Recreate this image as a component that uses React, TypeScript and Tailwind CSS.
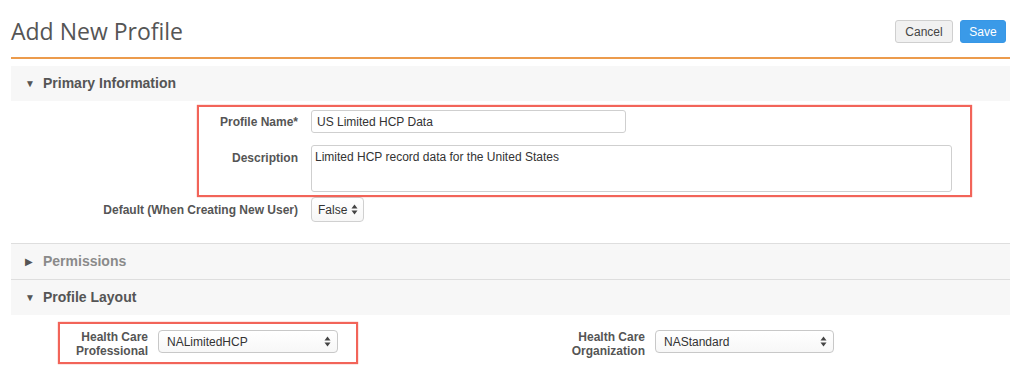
import type { ReactNode } from "react";

function Arrows() {
  return (
    <svg width="7" height="11" viewBox="0 0 7 11" className="shrink-0">
      <path d="M3.5 0.5L6.5 4.5H0.5Z" fill="#444" />
      <path d="M3.5 10.5L6.5 6.5H0.5Z" fill="#444" />
    </svg>
  );
}

function FakeSelect({ value, width }: { value: string; width: string }) {
  return (
    <div
      className={`flex h-[23px] ${width} items-center justify-between rounded-[4px] border border-[#c8c8c8] bg-gradient-to-b from-white to-[#f7f7f7] pl-[8px] pr-[6px] text-[12px] text-[#333]`}
    >
      <span>{value}</span>
      <Arrows />
    </div>
  );
}

function SectionHeader({ title, open, muted }: { title: string; open: boolean; muted?: boolean }) {
  return (
    <div className="flex h-[35px] items-center bg-[#f7f7f7] pl-[14px]">
      <span className="w-[18px] text-[10px] text-[#555]">{open ? "▼" : "▶"}</span>
      <span className={`text-[14px] font-bold ${muted ? "text-[#8a8a8a]" : "text-[#555]"}`}>{title}</span>
    </div>
  );
}

function Row({ label, children, align = "center" }: { label: ReactNode; children: ReactNode; align?: "center" | "start" }) {
  return (
    <div className={`flex gap-[13px] ${align === "center" ? "items-center" : "items-start"}`}>
      <div className="w-[287px] text-right text-[12px] font-bold text-[#555]">{label}</div>
      {children}
    </div>
  );
}

export default function App() {
  return (
    <div className="relative min-h-[376px] bg-white pl-[11px] pr-[5px] font-['Liberation_Sans',Arial,sans-serif]">
      <div className="flex items-start justify-between pb-[10px] pt-[16px]">
        <h1 className="font-['Open_Sans',sans-serif] text-[23px] leading-[31px] text-[#555]">Add New Profile</h1>
        <div className="mr-[4px] mt-[4px] flex gap-[7px]">
          <button
            type="button"
            className="h-[23px] w-[58px] rounded-[3px] border border-[#cfcfcf] bg-[#f1f1f1] text-[12px] text-[#444]"
          >
            Cancel
          </button>
          <button
            type="button"
            className="h-[23px] w-[46px] rounded-[3px] border border-[#3797e6] bg-[#3a9ae8] text-[12px] text-white"
          >
            Save
          </button>
        </div>
      </div>
      <div className="h-[2px] bg-[#ec9b4c]" />

      <div className="mt-[7px]">
        <SectionHeader title="Primary Information" open />
        <div className="flex flex-col pb-[21px] pt-[9px]">
          <Row label="Profile Name*">
            <div className="flex h-[23px] w-[315px] items-center rounded-[3px] border border-[#cfcfcf] px-[5px] text-[12px] text-[#333]">
              US Limited HCP Data
            </div>
          </Row>
          <div className="mt-[12px]">
            <Row label={<span className="block pt-[4px]">Description</span>} align="start">
              <div className="h-[47px] w-[641px] rounded-[3px] border border-[#cfcfcf] px-[3px] pt-[2px] text-[12px] text-[#333]">
                Limited HCP record data for the United States
              </div>
            </Row>
          </div>
          <div className="mt-[5px]">
            <Row label="Default (When Creating New User)">
              <div className="flex h-[25px] w-[53px] items-center justify-between rounded-[4px] border border-[#d0d0d0] bg-gradient-to-b from-white to-[#f7f7f7] pl-[6px] pr-[5px] text-[12px] text-[#333]">
                <span>False</span>
                <Arrows />
              </div>
            </Row>
          </div>
        </div>
      </div>

      <div className="border-t border-[#dedede]">
        <SectionHeader title="Permissions" open={false} muted />
      </div>
      <div className="border-t border-[#dedede]">
        <SectionHeader title="Profile Layout" open />
        <div className="grid grid-cols-[497px_1fr] pt-[15px]">
          <div className="flex items-start gap-[10px]">
            <div className="w-[137px] text-right text-[12px] font-bold leading-[14px] text-[#555]">
              Health Care
              <br />
              Professional
            </div>
            <FakeSelect value="NALimitedHCP" width="w-[180px]" />
          </div>
          <div className="flex items-start gap-[10px]">
            <div className="w-[137px] text-right text-[12px] font-bold leading-[14px] text-[#555]">
              Health Care
              <br />
              Organization
            </div>
            <FakeSelect value="NAStandard" width="w-[179px]" />
          </div>
        </div>
      </div>

      {/* annotation boxes */}
      <div className="pointer-events-none absolute left-[197px] top-[105px] h-[92px] w-[775px] border-2 border-[#f26459] shadow-[0_0_1px_#f26459]" />
      <div className="pointer-events-none absolute left-[58px] top-[322px] h-[42px] w-[300px] border-2 border-[#f26459] shadow-[0_0_1px_#f26459]" />
    </div>
  );
}
